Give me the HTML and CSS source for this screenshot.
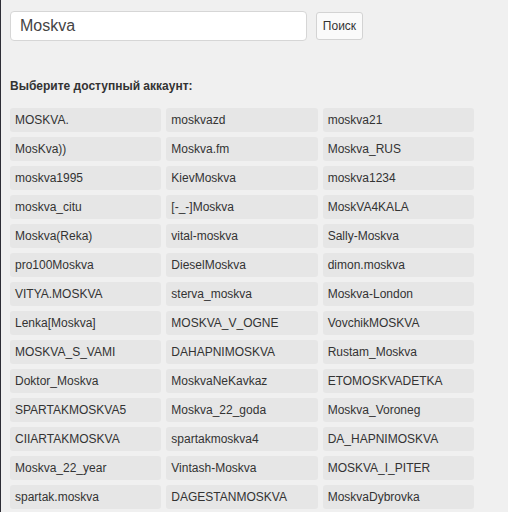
FILE: index.html
```html
<!DOCTYPE html>
<html lang="ru">
<head>
<meta charset="utf-8">
<link rel="stylesheet" href="styles.css">
</head>
<body>
<div class="page">
  <form class="search">
    <input class="search-input" type="text" value="Moskva">
    <button class="search-btn" type="button">Поиск</button>
  </form>
  <h3 class="title">Выберите доступный аккаунт:</h3>
  <div class="grid">
    <div class="item">MOSKVA.</div><div class="item">moskvazd</div><div class="item">moskva21</div>
    <div class="item">MosKva))</div><div class="item">Moskva.fm</div><div class="item">Moskva_RUS</div>
    <div class="item">moskva1995</div><div class="item">KievMoskva</div><div class="item">moskva1234</div>
    <div class="item">moskva_citu</div><div class="item">[-_-]Moskva</div><div class="item">MoskVA4KALA</div>
    <div class="item">Moskva(Reka)</div><div class="item">vital-moskva</div><div class="item">Sally-Moskva</div>
    <div class="item">pro100Moskva</div><div class="item">DieselMoskva</div><div class="item">dimon.moskva</div>
    <div class="item">VITYA.MOSKVA</div><div class="item">sterva_moskva</div><div class="item">Moskva-London</div>
    <div class="item">Lenka[Moskva]</div><div class="item">MOSKVA_V_OGNE</div><div class="item">VovchikMOSKVA</div>
    <div class="item">MOSKVA_S_VAMI</div><div class="item">DAHAPNIMOSKVA</div><div class="item">Rustam_Moskva</div>
    <div class="item">Doktor_Moskva</div><div class="item">MoskvaNeKavkaz</div><div class="item">ETOMOSKVADETKA</div>
    <div class="item">SPARTAKMOSKVA5</div><div class="item">Moskva_22_goda</div><div class="item">Moskva_Voroneg</div>
    <div class="item">CIIARTAKMOSKVA</div><div class="item">spartakmoskva4</div><div class="item">DA_HAPNIMOSKVA</div>
    <div class="item">Moskva_22_year</div><div class="item">Vintash-Moskva</div><div class="item">MOSKVA_I_PITER</div>
    <div class="item">spartak.moskva</div><div class="item">DAGESTANMOSKVA</div><div class="item">MoskvaDybrovka</div>
  </div>
</div>
</body>
</html>
```
FILE: styles.css
```css
html, body {
  margin: 0;
  padding: 0;
  height: 100%;
}
body {
  background: #f0f0f0;
  font-family: "Liberation Sans", Arial, sans-serif;
  color: #333;
  border-left: 1px solid #2e2e36;
  box-sizing: border-box;
  overflow: hidden;
}
.page {
  padding: 11px 0 0 9px;
}
.search {
  display: flex;
  align-items: center;
  gap: 9px;
  margin: 0;
}
.search-input {
  width: 297px;
  height: 30px;
  box-sizing: border-box;
  border: 1px solid #d6d6d6;
  border-radius: 4px;
  background: #fff;
  padding: 0 9px;
  font-family: "Liberation Sans", Arial, sans-serif;
  font-size: 16px;
  color: #444;
  outline: none;
}
.search-btn {
  width: 47px;
  height: 28px;
  box-sizing: border-box;
  border: 1px solid #d3d3d3;
  border-radius: 3px;
  background: #fafafa;
  font-family: "Liberation Sans", Arial, sans-serif;
  font-size: 12px;
  color: #333;
  padding: 0;
}
.title {
  margin: 38px 0 0 0;
  font-size: 12px;
  font-weight: bold;
  color: #333;
  line-height: 14px;
}
.grid {
  margin-top: 15px;
  width: 464px;
  display: grid;
  grid-template-columns: repeat(3, 1fr);
  column-gap: 5px;
  row-gap: 5px;
}
.item {
  height: 24px;
  line-height: 24px;
  background: #e6e6e6;
  border-radius: 3px;
  padding-left: 5px;
  font-size: 12px;
  color: #333;
  white-space: nowrap;
  overflow: hidden;
}
```
